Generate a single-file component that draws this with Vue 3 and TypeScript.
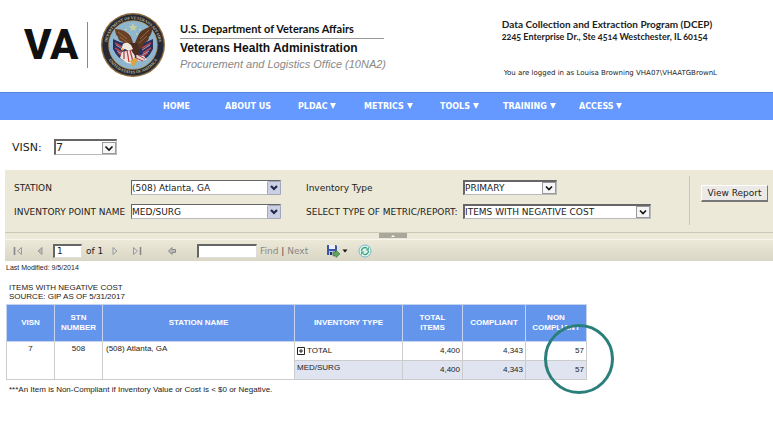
<script setup lang="ts">
import { ref } from 'vue'

interface NavItem {
  label: string
  menu: boolean
}

interface Row {
  type: string
  expandable: boolean
  total: string
  compliant: string
  nonCompliant: string
}

const nav: NavItem[] = [
  { label: 'HOME', menu: false },
  { label: 'ABOUT US', menu: false },
  { label: 'PLDAC', menu: true },
  { label: 'METRICS', menu: true },
  { label: 'TOOLS', menu: true },
  { label: 'TRAINING', menu: true },
  { label: 'ACCESS', menu: true },
]

const rows: Row[] = [
  { type: 'TOTAL', expandable: true, total: '4,400', compliant: '4,343', nonCompliant: '57' },
  { type: 'MED/SURG', expandable: false, total: '4,400', compliant: '4,343', nonCompliant: '57' },
]

const visn = ref('7')
const station = ref('(508) Atlanta, GA')
const point = ref('MED/SURG')
const inventoryType = ref('PRIMARY')
const metric = ref('ITEMS WITH NEGATIVE COST')
const page = ref('1')
const search = ref('')
</script>

<template>
  <div class="page">
    <header class="masthead">
      <div class="brand">
        <span class="va">VA</span>
        <span class="rule"></span>
        <svg class="seal" viewBox="0 0 66 66" role="img" aria-label="Department seal">
          <defs>
            <path id="arc-top" d="M7.2 36.5A26 26 0 1 1 58.8 36.5" />
            <path id="arc-bottom" d="M5.5 41A28.7 28.7 0 0 0 60.5 41" />
          </defs>
          <circle cx="33" cy="33" r="32" fill="#8a6a3c" />
          <circle cx="33" cy="33" r="30.6" fill="#262a38" />
          <circle cx="33" cy="33" r="24.8" fill="#a98b52" />
          <circle cx="33" cy="33" r="24" fill="#8fb6cf" />
          <g fill="#c9b98a" font-family="'Liberation Serif', serif" font-size="4" font-weight="bold">
            <text><textPath href="#arc-top" startOffset="50%" text-anchor="middle">DEPARTMENT OF VETERANS AFFAIRS</textPath></text>
            <text><textPath href="#arc-bottom" startOffset="50%" text-anchor="middle">UNITED STATES OF AMERICA</textPath></text>
          </g>
          <path d="M33 11l1.3 3 3.2.2-2.5 2 .9 3.1-2.9-1.8-2.9 1.8.9-3.1-2.5-2 3.2-.2z" fill="#c7cf9a" />
          <path d="M25 17.500h2M39 17.500h2M28 22h2M36 22h2" stroke="#c7cf9a" stroke-width="1.500" />
          <path d="M13 27q5 3 12 4l5 8-5 10q-7-2-12-12z" fill="#2b2f5f" />
          <path d="M53 27q-5 3-12 4l-5 8 5 10q7-2 12-12z" fill="#2b2f5f" />
          <path d="M15 31l9 5M15 36l8 5M18 41l7 4M51 31l-9 5M51 36l-8 5M48 41l-7 4" stroke="#b4474c" stroke-width="1.500" />
          <path d="M16 33l8 5M17 39l7 4M50 33l-8 5M49 39l-7 4" stroke="#d8d6dc" stroke-width=".7" />
          <path d="M15 17q11 0 16 8l3 8-5 6q-5-4-6-9-5-1-5-5-3-3-3-8z" fill="#6b4126" />
          <path d="M52 14q-12 3-15 12l-3 7 3 6q6-3 7-8 5-2 5-6 4-4 3-11z" fill="#5a3722" />
          <path d="M18 20l9 7M20 25l8 6M49 18l-9 9M47 24l-8 7" stroke="#9b6d43" stroke-width=".9" />
          <path d="M29 31h8l3 8-4 7h-5l-4-7z" fill="#4b2d20" />
          <path d="M23 32q4-3 8 1l2 4-4 2-4-2-4 1z" fill="#eee8dd" />
          <path d="M21 37l3-1-1 3z" fill="#dfac3c" />
          <path d="M22 40l9-2 4 6-1 8-7-1-7-5z" fill="#f0e4df" />
          <path d="M24 39v8M27 38l2 12M30 38l3 12" stroke="#b94249" stroke-width="1.300" />
          <path d="M36 43l8 1 3 4-9 1z" fill="#e7d7d0" />
          <path d="M38 43l7 4M36 46l7 3" stroke="#b94249" stroke-width="1" />
          <path d="M30 49l3 6 5-7-3-2z" fill="#d9a63c" />
        </svg>
        <div class="titles">
          <div class="dept">U.S. Department of Veterans Affairs</div>
          <div class="admin">Veterans Health Administration</div>
          <div class="office">Procurement and Logistics Office (10NA2)</div>
        </div>
      </div>
      <div class="program">
        <div class="program-name">Data Collection and Extraction Program (DCEP)</div>
        <div class="address">2245 Enterprise Dr., Ste 4514 Westchester, IL 60154</div>
        <div class="login">You are logged in as Louisa Browning VHA07\VHAATGBrownL</div>
      </div>
    </header>

    <nav class="nav">
      <a v-for="item in nav" :key="item.label" href="#">
        {{ item.label }}
        <svg v-if="item.menu" class="tri" viewBox="0 0 6 6" aria-hidden="true"><path d="M0 0h6l-3 6z" fill="#fff" /></svg>
      </a>
    </nav>

    <div class="visn">
      <label for="visn">VISN:</label>
      <span class="drop visn-drop">
        <select id="visn" v-model="visn"><option>7</option></select>
        <svg class="arrow" viewBox="0 0 14 12" aria-hidden="true"><rect x=".5" y=".5" width="13" height="11" fill="#f6f6f6" stroke="#999" /><path d="M3.500 4.500L7 8l3.500-3.500" fill="none" stroke="#111" stroke-width="1.600" /></svg>
      </span>
    </div>

    <main>
      <section class="viewer">
        <div class="params">
          <div class="fields">
            <label for="station">STATION</label>
            <span class="drop flat">
              <select id="station" v-model="station"><option>(508) Atlanta, GA</option></select>
              <svg class="arrow" viewBox="0 0 14 14" aria-hidden="true"><rect x=".5" y=".5" width="13" height="13" rx="1" fill="#ccd0e4" stroke="#a3a7bd" /><path d="M4 5l3 3 3-3" fill="none" stroke="#26284a" stroke-width="2.200" /></svg>
            </span>
            <label for="type">Inventory Type</label>
            <span class="drop type-drop">
              <select id="type" v-model="inventoryType"><option>PRIMARY</option></select>
              <svg class="arrow" viewBox="0 0 14 12" aria-hidden="true"><rect x=".5" y=".5" width="13" height="11" fill="#f6f6f6" stroke="#999" /><path d="M4 4.500l3 3 3-3" fill="none" stroke="#111" stroke-width="1.600" /></svg>
            </span>
            <label for="point">INVENTORY POINT NAME</label>
            <span class="drop flat">
              <select id="point" v-model="point"><option>MED/SURG</option></select>
              <svg class="arrow" viewBox="0 0 14 14" aria-hidden="true"><rect x=".5" y=".5" width="13" height="13" rx="1" fill="#ccd0e4" stroke="#a3a7bd" /><path d="M4 5l3 3 3-3" fill="none" stroke="#26284a" stroke-width="2.200" /></svg>
            </span>
            <label for="metric">SELECT TYPE OF METRIC/REPORT:</label>
            <span class="drop">
              <select id="metric" v-model="metric"><option>ITEMS WITH NEGATIVE COST</option></select>
              <svg class="arrow" viewBox="0 0 14 12" aria-hidden="true"><rect x=".5" y=".5" width="13" height="11" fill="#f6f6f6" stroke="#999" /><path d="M4 4.500l3 3 3-3" fill="none" stroke="#111" stroke-width="1.600" /></svg>
            </span>
          </div>
          <div class="submit"><button type="button" class="view">View Report</button></div>
        </div>
        <div class="splitter">
          <button type="button" class="handle" aria-label="Hide parameters">
            <svg viewBox="0 0 28 5"><path d="M12 4l2-2 2 2z" fill="#fff" /></svg>
          </button>
        </div>
        <div class="toolbar">
          <button type="button" class="tool first" aria-label="First page">
            <svg viewBox="0 0 10 10"><path d="M1.500 1v8" stroke="#888" stroke-width="1.600" /><path d="M8.500 1.500v7l-4-3.500z" fill="#ddd" stroke="#999" /></svg>
          </button>
          <button type="button" class="tool prev" aria-label="Previous page">
            <svg viewBox="0 0 10 10"><path d="M7 1.500v7l-4-3.500z" fill="#bbb" stroke="#999" /></svg>
          </button>
          <input v-model="page" class="page-no" type="text" aria-label="Current page" />
          <span class="of">of 1</span>
          <button type="button" class="tool next" aria-label="Next page">
            <svg viewBox="0 0 10 10"><path d="M3 1.500v7l4-3.500z" fill="#ddd" stroke="#999" /></svg>
          </button>
          <button type="button" class="tool last" aria-label="Last page">
            <svg viewBox="0 0 10 10"><path d="M1.500 1.500v7l4-3.500z" fill="#ddd" stroke="#999" /><path d="M8.500 1v8" stroke="#888" stroke-width="1.600" /></svg>
          </button>
          <button type="button" class="tool back" aria-label="Back">
            <svg viewBox="0 0 10 10"><path d="M5 1.500L1.500 5 5 8.500v-2h3.500v-3H5z" fill="#bbb" stroke="#888" /></svg>
          </button>
          <input v-model="search" class="find-box" type="text" aria-label="Find text" />
          <span class="find"><a href="#">Find</a> <b>|</b> <a href="#">Next</a></span>
          <button type="button" class="tool save" aria-label="Export">
            <svg viewBox="0 0 22 14">
              <path d="M1 1h9l1 1v9H1z" fill="#3d57a8" /><path d="M3 1h6v4H3z" fill="#e9eefa" /><path d="M3 7h6v4H3z" fill="#b8c3e3" /><path d="M4 8h2v3H4z" fill="#27366f" />
              <path d="M7 8h3V6l4 4-4 3.500V12H7z" fill="#5fa65a" stroke="#47704b" stroke-width=".6" />
              <path d="M16.500 5.500h5L19 8.500z" fill="#111" />
            </svg>
          </button>
          <button type="button" class="tool refresh" aria-label="Refresh">
            <svg viewBox="0 0 14 14">
              <circle cx="7" cy="7" r="6" fill="#e5f4f5" stroke="#78b9cd" />
              <path d="M3.500 7A3.500 3.500 0 0 1 9 4.200" fill="none" stroke="#3aa270" stroke-width="1.400" /><path d="M10.800 3v3.500H7.500z" fill="#3aa270" />
              <path d="M10.500 7A3.500 3.500 0 0 1 5 9.800" fill="none" stroke="#3aa270" stroke-width="1.400" /><path d="M3.200 11V7.500h3.300z" fill="#3aa270" />
            </svg>
          </button>
        </div>
      </section>

      <section class="report">
        <p class="modified">Last Modified: 9/5/2014</p>
        <h1>ITEMS WITH NEGATIVE COST<br />SOURCE: GIP AS OF 5/31/2017</h1>
        <div class="table-wrap">
          <table>
            <colgroup>
              <col class="c-visn" /><col class="c-stn" /><col class="c-name" /><col class="c-type" /><col class="c-total" /><col class="c-comp" /><col class="c-non" />
            </colgroup>
            <thead>
              <tr>
                <th>VISN</th>
                <th>STN<br />NUMBER</th>
                <th>STATION NAME</th>
                <th>INVENTORY TYPE</th>
                <th>TOTAL<br />ITEMS</th>
                <th>COMPLIANT</th>
                <th>NON<br />COMPLIANT</th>
              </tr>
            </thead>
            <tbody>
              <tr v-for="(row, i) in rows" :key="row.type" :class="{ alt: i === 1 }">
                <template v-if="i === 0">
                  <td class="mid" :rowspan="rows.length">7</td>
                  <td class="mid" :rowspan="rows.length">508</td>
                  <td class="name" :rowspan="rows.length">(508) Atlanta, GA</td>
                </template>
                <td class="type">
                  <button v-if="row.expandable" type="button" class="expand" aria-label="Expand">
                    <svg viewBox="0 0 8 8"><path d="M.5.5h7v7h-7zM2 4h4M4 2v4" fill="none" stroke="#222" /></svg>
                  </button>
                  {{ row.type }}
                </td>
                <td class="num">{{ row.total }}</td>
                <td class="num">{{ row.compliant }}</td>
                <td class="num">{{ row.nonCompliant }}</td>
              </tr>
            </tbody>
          </table>
          <span class="ring"></span>
        </div>
        <p class="note">***An Item is Non-Compliant if Inventory Value or Cost is &lt; $0 or Negative.</p>
      </section>
    </main>
  </div>
</template>

<style>
body {
  margin: 0;
  background: #fff;
}
</style>

<style scoped>
.page {
  font-family: 'DejaVu Sans', Verdana, sans-serif;
  font-size: 8px;
  color: #222;
}

button,
input,
select {
  box-sizing: border-box;
  margin: 0;
  font: inherit;
  color: inherit;
}

.masthead {
  display: flex;
  justify-content: space-between;
  height: 92px;
  padding: 0 56px 0 24px;
}

.brand {
  display: flex;
  align-items: center;
  height: 90px;
}

.va {
  width: 63px;
  font: 800 42px/1 Roboto, sans-serif;
  color: #111;
}

.rule {
  width: 1px;
  height: 46px;
  background: #888;
}

.seal {
  width: 66px;
  height: 66px;
  margin: 0 14px 0 12px;
}

.titles {
  font-family: 'Liberation Sans', Arial, sans-serif;
  color: #111;
  white-space: nowrap;
}

.dept {
  width: 204px;
  border-bottom: 1px solid #999;
  font: bold 11px/18px Lato, sans-serif;
}

.admin {
  font-size: 12px;
  line-height: 18px;
  font-weight: bold;
}

.office {
  font-size: 11px;
  line-height: 14px;
  font-style: italic;
  color: #888;
}

.program {
  padding-top: 17px;
  white-space: nowrap;
  color: #222;
}

.program-name {
  font: bold 10px/14px Lato, sans-serif;
}

.address {
  font: bold 9px/12px Lato, sans-serif;
  font-variant-numeric: oldstyle-nums;
}

.login {
  padding: 24px 0 0 2px;
  font-size: 7px;
  line-height: 12px;
}

.nav {
  box-sizing: border-box;
  display: grid;
  grid-template-columns: 62px 73px 66px 76px 63px 76px auto;
  align-items: center;
  height: 28px;
  padding-left: 163px;
  border-top: 1px solid #5585d8;
  background: #6699ff;
}

.nav a {
  font-weight: bold;
  color: #fff;
  text-decoration: none;
  white-space: nowrap;
}

.tri {
  width: 6px;
  height: 6px;
}

.visn {
  display: flex;
  align-items: center;
  height: 50px;
  padding: 4px 0 0 12px;
  box-sizing: border-box;
}

.visn label {
  width: 42px;
  font-size: 11px;
}

.drop {
  display: grid;
  align-items: center;
  justify-items: end;
}

.drop select,
.drop .arrow {
  grid-area: 1 / 1;
}

.drop select {
  width: 100%;
  height: 15px;
  padding: 0;
  appearance: none;
  border: 1px solid #bbb;
  border-top: 2px solid #666;
  border-left: 2px solid #666;
  border-radius: 0;
  background: #fff;
}

.drop .arrow {
  width: 14px;
  height: 12px;
  margin: 1px 1px 0 0;
  pointer-events: none;
}

.drop.flat select {
  border-width: 1px;
}

.drop.flat .arrow {
  height: 14px;
  margin: 0;
}

.visn-drop {
  width: 63px;
}

.visn-drop select {
  height: 16px;
  font-size: 11px;
}

.viewer {
  margin-left: 5px;
  background: #ece9d8;
  font-size: 9px;
}

.params {
  display: flex;
  justify-content: space-between;
  padding: 6px 5px 7px 9px;
}

.fields {
  display: grid;
  grid-template-columns: 117px 150px 182px 188px;
  grid-template-rows: 15px 15px;
  row-gap: 9px;
  align-items: center;
  padding-top: 4px;
}

.fields label {
  white-space: nowrap;
}

.flat + label {
  padding-left: 25px;
}

.type-drop {
  width: 94px;
}

.submit {
  height: 49px;
  padding: 9px 0 0 11px;
  box-sizing: border-box;
  border-left: 1px solid #c8c5b5;
}

.view {
  width: 67px;
  height: 17px;
  padding: 0;
  border: 1px solid #fff;
  border-right-color: #777;
  border-bottom: 2px solid #777;
  background: #eceae6;
  white-space: nowrap;
}

.splitter {
  display: flex;
  justify-content: center;
  height: 6px;
  padding-left: 8px;
  border-top: 1px solid #cbc8b8;
}

.handle {
  width: 28px;
  height: 5px;
  padding: 0;
  border: 0;
  background: #aaa79b;
}

.handle svg {
  display: block;
}

.toolbar {
  box-sizing: border-box;
  display: flex;
  align-items: center;
  height: 22px;
  padding-left: 8px;
  border-top: 1px solid #f7f6ee;
  background: linear-gradient(#ece9d8, #d9d6c5);
}

.tool {
  flex: none;
  width: 10px;
  padding: 0;
  border: 0;
  background: none;
}

.tool svg {
  display: block;
  width: 100%;
}

.prev {
  margin-left: 12px;
}

.toolbar input {
  height: 14px;
  padding: 0 2px;
  border: 1px solid #ddd;
  border-top: 2px solid #666;
  border-left: 2px solid #666;
  background: #fff;
}

.toolbar .page-no {
  width: 29px;
  margin-left: 8px;
}

.of {
  width: 24px;
  margin-left: 4px;
}

.last {
  margin-left: 12px;
}

.back {
  margin-left: 25px;
}

.toolbar .find-box {
  width: 60px;
  margin-left: 20px;
}

.find {
  width: 60px;
  margin-left: 3px;
  color: #444;
  white-space: nowrap;
}

.find b {
  font-weight: normal;
}

.find a {
  color: #888;
  text-decoration: none;
}

.save {
  width: 22px;
  margin-left: 6px;
}

.refresh {
  width: 14px;
  margin-left: 10px;
}

.report {
  padding-left: 6px;
  font-family: 'Liberation Sans', Arial, sans-serif;
}

.modified {
  margin: 0;
  padding-top: 2px;
  font-size: 7px;
  line-height: 10px;
}

h1 {
  margin: 10px 0 3px 3px;
  font-size: 8px;
  line-height: 9px;
  font-weight: normal;
}

.table-wrap {
  position: relative;
  width: 581px;
}

table {
  width: 100%;
  table-layout: fixed;
  border-collapse: collapse;
}

.c-visn,
.c-stn {
  width: 48px;
}

.c-name {
  width: 192px;
}

.c-type {
  width: 108px;
}

.c-total {
  width: 60px;
}

.c-comp {
  width: 63px;
}

th {
  height: 36px;
  padding: 0;
  border: 1px solid #c5d3ee;
  background: #6495ed;
  color: #fff;
  line-height: 10px;
}

td {
  height: 18px;
  padding: 0 3px;
  border: 1px solid #ccc;
  line-height: 10px;
}

.mid,
.name {
  padding-top: 2px;
  vertical-align: top;
}

.mid {
  text-align: center;
}

.num {
  padding-right: 2px;
  text-align: right;
}

.type {
  padding-left: 2px;
}

.alt .type {
  vertical-align: top;
  padding-top: 2px;
  height: 16px;
}

.alt td {
  background: #dfe4f0;
}

.expand {
  width: 8px;
  height: 8px;
  padding: 0;
  border: 0;
  background: none;
  vertical-align: middle;
}

.expand svg {
  display: block;
}

.ring {
  position: absolute;
  top: 20px;
  right: -27px;
  box-sizing: border-box;
  width: 70px;
  height: 70px;
  border: 3px solid #2a7f7b;
  border-radius: 50%;
  pointer-events: none;
}

.note {
  margin: 5px 0 0 3px;
  font-size: 8px;
  line-height: 10px;
}
</style>
